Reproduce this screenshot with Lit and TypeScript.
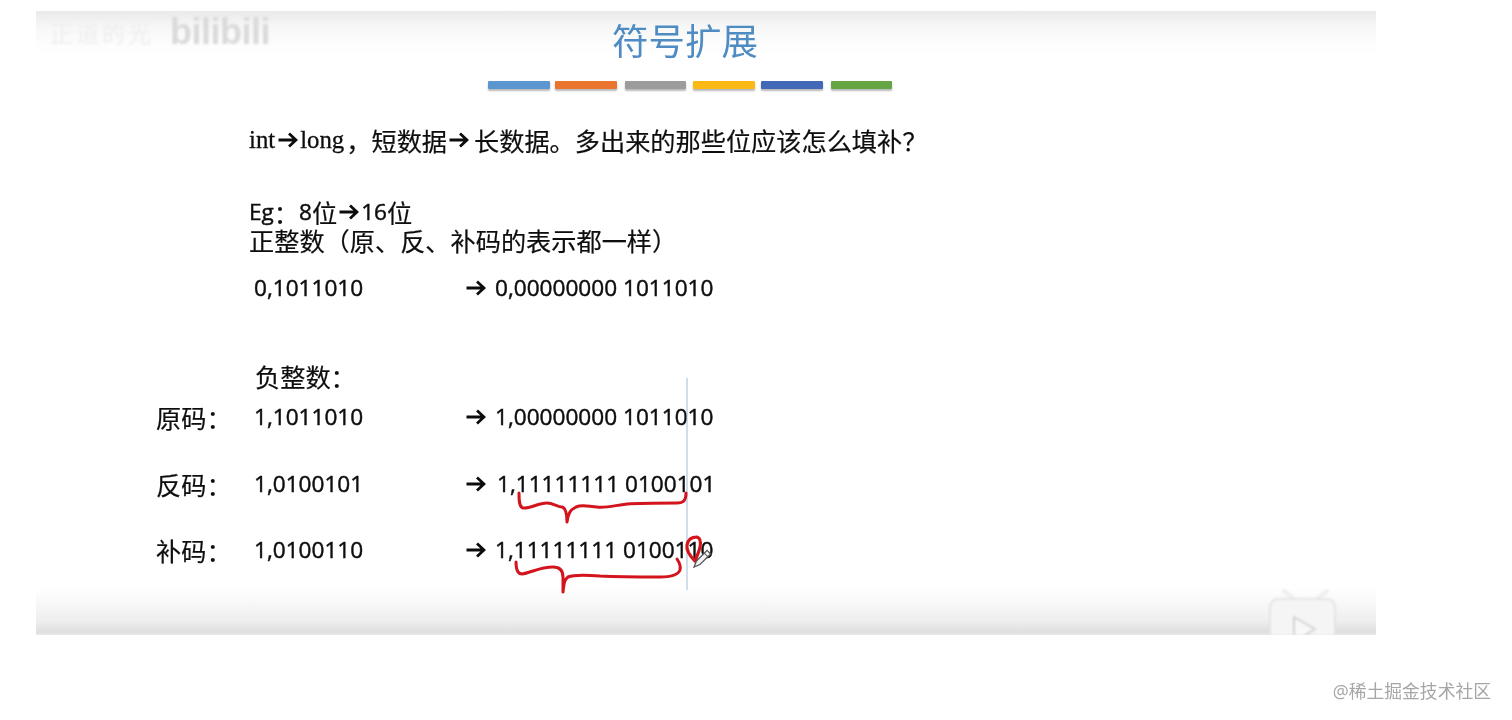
import { LitElement, html, css, svg } from "lit";
import { customElement } from "lit/decorators.js";

const bars = [
  { color: "#5b96cf", gap: 0 },
  { color: "#e9752f", gap: 5.5 },
  { color: "#9c9c9c", gap: 8 },
  { color: "#fdb913", gap: 7 },
  { color: "#4169b8", gap: 6.5 },
  { color: "#66a544", gap: 8 },
];

const rows = [
  { id: "pos", label: "", value: "0,1011010", out: "0,00000000 1011010", shift: 0 },
  { id: "orig", label: "原码：", value: "1,1011010", out: "1,00000000 1011010", shift: 0 },
  { id: "inv", label: "反码：", value: "1,0100101", out: "1,11111111 0100101", shift: 2 },
  { id: "comp", label: "补码：", value: "1,0100110", out: "1,11111111 0100110", shift: 0 },
];

const arrow = (cls = "") => html`<svg class="arrow ${cls}" viewBox="0 0 20 16" width="20" height="16" aria-hidden="true">
  <path d="M0.5 8H18M11 1.5L18 8L11 14.5" fill="none" stroke="#0c0c0c" stroke-width="2.8" />
</svg>`;

const ink = svg`
  <path d="M687 378V590" stroke="#a3bbd3" stroke-width="1" fill="none" />
  <g fill="none" stroke="#d3141c" stroke-width="3" stroke-linecap="round" stroke-linejoin="round">
    <path d="M519 493C519 500 519 507 523 508C530 509 538 503 547 503C553 503 558 507 562 507C566 508 567 514 567 522C568 514 570 510 576 507C583 504 590 507 597 507C605 508 612 506 627 504C640 503 655 503 677 503C683 503 686 501 686 493" />
    <path d="M516 562C516 569 518 574 522 574C530 573 540 567 553 567C560 567 563 571 563 577L563 592C564 584 564 580 568 577C575 574 588 575 600 576C620 577 640 577 660 577C670 577 678 575 680 570C681 566 679 562 677 559" />
    <path d="M695 561C690 556 686 551 687 545C688 539 692 537 697 537C700 538 701 542 700 547C699 552 697 556 695 561Z" stroke-width="3.2" />
  </g>
  <g transform="translate(694 567) rotate(45)">
    <path d="M-2.5 -21H2.5V-6L0 0L-2.5 -6V-21Z" fill="#f4f4f4" stroke="#555" stroke-width="1.3" />
    <path d="M-2.5 -17H2.5" stroke="#555" stroke-width="1" />
  </g>
`;

const tvLogo = svg`
  <g fill="none" stroke-linejoin="round">
    <path d="M1284 591L1296 601M1327 591L1315 601" stroke="#ededed" stroke-width="4" stroke-linecap="round" />
    <path d="M1270 650V608Q1270 599 1279 599H1326Q1335 599 1335 608V650" fill="#f5f5f5" stroke="#e0e0e0" stroke-width="1.6" />
    <path d="M1294 617L1315 629L1294 642Z" fill="#f8f8f8" stroke="#d2d2d2" stroke-width="2" />
  </g>
`;

@customElement("app-root")
export class AppRoot extends LitElement {
  static styles = css`
    :host {
      display: block;
      height: 720px;
      background: #fff;
      font-family: "Noto Sans CJK SC", sans-serif;
      font-weight: 400;
      color: #0e0e0e;
      overflow: hidden;
    }
    .slide {
      position: relative;
      width: 1340px;
      height: 624px;
      margin: 11px 0 0 36px;
      background: linear-gradient(
        #e9e9e9 0,
        #f6f6f6 14px,
        #fdfdfd 34px,
        #fff 46px,
        #fff 576px,
        #f8f8f8 592px,
        #eeeeee 610px,
        #dfdfdf 621px,
        #e8e8e8 624px
      );
      overflow: hidden;
    }
    .content {
      filter: blur(0.45px);
    }
    .title {
      height: 60px;
      line-height: 58px;
      text-align: center;
      font-size: 36.5px;
      color: #4f8cc4;
      padding-right: 42px;
    }
    .bars {
      display: flex;
      height: 8px;
      margin: 10px 0 0 452px;
    }
    .bar {
      width: 61.5px;
      height: 8px;
      border-radius: 1px;
      box-shadow: 0 2px 2px rgba(0, 0, 0, 0.28);
    }
    .line {
      display: flex;
      align-items: center;
      height: 30px;
      line-height: 30px;
      margin-left: 213px;
      font-size: 25.2px;
      white-space: nowrap;
      -webkit-text-stroke: 0.2px #0e0e0e;
    }
    .question {
      margin-top: 36px;
    }
    .serif {
      font-family: "Liberation Serif", serif;
      font-size: 24.8px;
      -webkit-text-stroke: 0.3px #0e0e0e;
    }
    .comma {
      margin-left: 2px;
    }
    .arrow {
      flex: none;
    }
    .question .arrow {
      margin: 0 2px 0 3px;
    }
    .question .arrow.second {
      margin: 0 5px 0 2px;
    }
    .eg {
      margin-top: 43px;
      height: 27px;
    }
    .latin {
      font-family: "Open Sans", sans-serif;
      font-size: 22.6px;
      -webkit-text-stroke: 0.45px #0e0e0e;
    }
    .eg .arrow {
      margin: 0 2px;
    }
    .neg {
      margin-top: 58px;
      margin-left: 219px;
    }
    .row {
      display: grid;
      grid-template-columns: 98px 212px 1fr;
      grid-template-rows: 30px;
      align-items: center;
      height: 30px;
      line-height: 30px;
      padding-left: 120px;
      font-size: 25.2px;
      white-space: nowrap;
      -webkit-text-stroke: 0.2px #0e0e0e;
    }
    .row .num {
      font-family: "Open Sans", sans-serif;
      font-size: 22.6px;
      -webkit-text-stroke: 0.45px #0e0e0e;
    }
    .row .result {
      display: flex;
      align-items: center;
    }
    .row .arrow {
      margin-right: 9px;
    }
    .row-pos {
      margin-top: 18px;
    }
    .row-orig {
      margin-top: 11px;
    }
    .row-inv {
      margin-top: 37px;
    }
    .row-comp {
      margin-top: 36px;
    }
    .tv {
      position: absolute;
      inset: 0;
      filter: blur(0.8px);
    }
    .ink {
      position: absolute;
      inset: 0;
      filter: blur(0.35px);
    }
    .mark {
      position: absolute;
      left: 14px;
      top: 1px;
      display: flex;
      align-items: center;
      gap: 16px;
      height: 40px;
      line-height: 40px;
      filter: blur(1px);
      white-space: nowrap;
    }
    .mark-name {
      font-size: 23px;
      letter-spacing: 3px;
      color: #eeeeee;
    }
    .mark-logo {
      font-family: "Liberation Sans", sans-serif;
      font-weight: 700;
      font-size: 36px;
      letter-spacing: -0.5px;
      color: #dadada;
    }
    .footer {
      height: 30px;
      line-height: 30px;
      margin-top: 40px;
      padding-right: 21px;
      text-align: right;
      font-size: 17.8px;
      color: #a6a6a6;
      filter: blur(0.3px);
    }
    .footer .at {
      font-family: "Open Sans", sans-serif;
    }
  `;

  render() {
    return html`
      <div class="slide">
        <div class="content">
          <div class="title">符号扩展</div>
          <div class="bars">
            ${bars.map(
              (b) => html`<div class="bar" style="background:${b.color};margin-left:${b.gap}px"></div>`
            )}
          </div>
          <div class="line question">
            <span class="serif">int</span>${arrow()}<span class="serif">long</span><span class="comma">，短数据</span>${arrow("second")}<span>长数据。多出来的那些位应该怎么填补？</span>
          </div>
          <div class="line eg">
            <span class="latin">Eg</span><span>：</span><span class="latin">8</span><span>位</span>${arrow()}<span class="latin">16</span><span>位</span>
          </div>
          <div class="line">正整数（原、反、补码的表示都一样）</div>
          ${this.renderRow(rows[0])}
          <div class="line neg">负整数：</div>
          ${rows.slice(1).map((r) => this.renderRow(r))}
        </div>
        <svg class="tv" viewBox="36 11 1340 624" width="1340" height="624">${tvLogo}</svg>
        <div class="mark">
          <span class="mark-name">正道的光</span>
          <span class="mark-logo">bilibili</span>
        </div>
        <svg class="ink" viewBox="36 11 1340 624" width="1340" height="624">${ink}</svg>
      </div>
      <div class="footer"><span class="at">@</span>稀土掘金技术社区</div>
    `;
  }

  renderRow(r: (typeof rows)[number]) {
    return html`
      <div class="row row-${r.id}">
        <span>${r.label}</span>
        <span class="num">${r.value}</span>
        <span class="result">${arrow()}<span class="num" style="margin-left:${r.shift}px">${r.out}</span></span>
      </div>
    `;
  }
}
